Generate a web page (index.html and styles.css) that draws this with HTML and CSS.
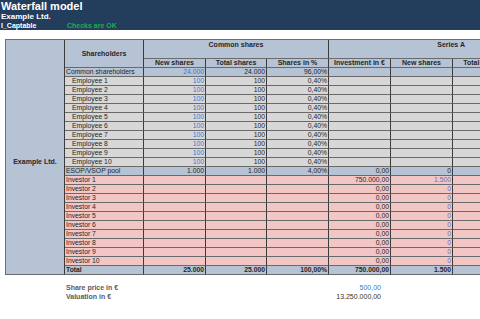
FILE: index.html
```html
<!DOCTYPE html>
<html lang="en">
<head>
<meta charset="utf-8">
<title>Waterfall model</title>
<link rel="stylesheet" href="styles.css">
</head>
<body>
<header class="top">
  <div class="title">Waterfall model</div>
  <div class="company">Example Ltd.</div>
  <div class="sheetline"><span class="sheet">I_Captable</span><span class="checks">Checks are OK</span></div>
</header>

<div class="grid">
  <div class="side">Example Ltd.</div>
  <div class="h shh">Shareholders</div>
  <div class="h grp1">Common shares</div>
  <div class="h grp2">Series A</div>

  <div class="h">New shares</div>
  <div class="h">Total shares</div>
  <div class="h">Shares in %</div>
  <div class="h">Investment in €</div>
  <div class="h">New shares</div>
  <div class="h">Total shares</div>

  <div class="row blue"><div class="name">Common shareholders</div><div class="num in">24.000</div><div class="num">24.000</div><div class="num">96,00%</div><div></div><div></div><div></div></div>
  <div class="row emp"><div class="name sub">Employee 1</div><div class="num in">100</div><div class="num">100</div><div class="num">0,40%</div><div></div><div></div><div></div></div>
  <div class="row emp"><div class="name sub">Employee 2</div><div class="num in">100</div><div class="num">100</div><div class="num">0,40%</div><div></div><div></div><div></div></div>
  <div class="row emp"><div class="name sub">Employee 3</div><div class="num in">100</div><div class="num">100</div><div class="num">0,40%</div><div></div><div></div><div></div></div>
  <div class="row emp"><div class="name sub">Employee 4</div><div class="num in">100</div><div class="num">100</div><div class="num">0,40%</div><div></div><div></div><div></div></div>
  <div class="row emp"><div class="name sub">Employee 5</div><div class="num in">100</div><div class="num">100</div><div class="num">0,40%</div><div></div><div></div><div></div></div>
  <div class="row emp"><div class="name sub">Employee 6</div><div class="num in">100</div><div class="num">100</div><div class="num">0,40%</div><div></div><div></div><div></div></div>
  <div class="row emp"><div class="name sub">Employee 7</div><div class="num in">100</div><div class="num">100</div><div class="num">0,40%</div><div></div><div></div><div></div></div>
  <div class="row emp"><div class="name sub">Employee 8</div><div class="num in">100</div><div class="num">100</div><div class="num">0,40%</div><div></div><div></div><div></div></div>
  <div class="row emp"><div class="name sub">Employee 9</div><div class="num in">100</div><div class="num">100</div><div class="num">0,40%</div><div></div><div></div><div></div></div>
  <div class="row emp"><div class="name sub">Employee 10</div><div class="num in">100</div><div class="num">100</div><div class="num">0,40%</div><div></div><div></div><div></div></div>
  <div class="row blue"><div class="name">ESOP/VSOP pool</div><div class="num">1.000</div><div class="num">1.000</div><div class="num">4,00%</div><div class="num">0,00</div><div class="num">0</div><div></div></div>
  <div class="row inv"><div class="name">Investor 1</div><div></div><div></div><div></div><div class="num">750.000,00</div><div class="num in2">1.500</div><div></div></div>
  <div class="row inv"><div class="name">Investor 2</div><div></div><div></div><div></div><div class="num">0,00</div><div class="num in2">0</div><div></div></div>
  <div class="row inv"><div class="name">Investor 3</div><div></div><div></div><div></div><div class="num">0,00</div><div class="num in2">0</div><div></div></div>
  <div class="row inv"><div class="name">Investor 4</div><div></div><div></div><div></div><div class="num">0,00</div><div class="num in2">0</div><div></div></div>
  <div class="row inv"><div class="name">Investor 5</div><div></div><div></div><div></div><div class="num">0,00</div><div class="num in2">0</div><div></div></div>
  <div class="row inv"><div class="name">Investor 6</div><div></div><div></div><div></div><div class="num">0,00</div><div class="num in2">0</div><div></div></div>
  <div class="row inv"><div class="name">Investor 7</div><div></div><div></div><div></div><div class="num">0,00</div><div class="num in2">0</div><div></div></div>
  <div class="row inv"><div class="name">Investor 8</div><div></div><div></div><div></div><div class="num">0,00</div><div class="num in2">0</div><div></div></div>
  <div class="row inv"><div class="name">Investor 9</div><div></div><div></div><div></div><div class="num">0,00</div><div class="num in2">0</div><div></div></div>
  <div class="row inv"><div class="name">Investor 10</div><div></div><div></div><div></div><div class="num">0,00</div><div class="num in2">0</div><div></div></div>
  <div class="row blue total"><div class="name">Total</div><div class="num">25.000</div><div class="num">25.000</div><div class="num">100,00%</div><div class="num">750.000,00</div><div class="num">1.500</div><div></div></div>
</div>

<section class="summary">
  <div class="srow"><span class="slabel">Share price in €</span><span class="sval price">500,00</span></div>
  <div class="srow"><span class="slabel">Valuation in €</span><span class="sval">13.250.000,00</span></div>
</section>
</body>
</html>
```

FILE: styles.css
```css
html, body {
  margin: 0;
  padding: 0;
  background: #ffffff;
  overflow: hidden;
  font-family: "Liberation Sans", Arial, sans-serif;
}

.top {
  background: #233d5d;
  color: #ffffff;
  height: 30px;
  padding-left: 1px;
  font-weight: bold;
}
.title {
  font-size: 11px;
  line-height: 12px;
}
.company {
  font-size: 8px;
  line-height: 9px;
}
.sheetline {
  display: flex;
  font-size: 7px;
  line-height: 9px;
}
.sheet {
  width: 66px;
}
.checks {
  color: #14b14e;
}

.grid {
  margin: 9px 0 0 5px;
  display: grid;
  width: max-content;
  grid-template-columns: 59px 79px 62px 61px 62px 62px 62px 62px;
  grid-template-rows: 19px 9px repeat(23, 9px);
  border-top: 1px solid #6e6e6e;
  border-left: 1px solid #6e6e6e;
  font-size: 6.8px;
  color: #262626;
}
.grid > div,
.row > div {
  box-sizing: border-box;
  border-right: 1px solid #3c3c3c;
  border-bottom: 1px solid #6a6a6a;
  line-height: 8px;
  padding: 0 1px;
  white-space: nowrap;
}
.grid > .row {
  display: contents;
}

.side {
  grid-column: 1;
  grid-row: 1 / span 25;
  background: #b6c3d5;
  font-weight: bold;
  font-size: 7px;
  display: flex;
  align-items: center;
  justify-content: center;
  padding-top: 9px !important;
}
.h {
  background: #b6c3d5;
  font-weight: bold;
  font-size: 7px;
  text-align: center;
}
.shh {
  grid-column: 2;
  grid-row: 1 / span 2;
  display: flex;
  align-items: center;
  justify-content: center;
  padding-top: 1px !important;
}
.grp1 {
  grid-column: 3 / span 3;
  grid-row: 1;
  padding-top: 1px !important;
}
.grp2 {
  grid-column: 6 / span 3;
  grid-row: 1;
  text-align: right;
  padding: 1px 49px 0 1px !important;
}

.blue > div { background: #b6c3d5; }
.emp > div { background: #d8d7d7; }
.inv > div { background: #f3c6c6; }

.num { text-align: right; }
.sub { padding-left: 7px !important; }
.in { color: #2f7bd4; }
.in2 { color: #5b70c4; }
.total > div { font-weight: bold; }

.summary {
  margin: 8px 0 0 66px;
  width: 315px;
  font-size: 7px;
  line-height: 9px;
}
.srow {
  display: flex;
  justify-content: space-between;
}
.slabel {
  font-weight: bold;
  color: #5a5a5a;
}
.sval {
  color: #333333;
}
.price {
  color: #2f7bd4;
}
```
